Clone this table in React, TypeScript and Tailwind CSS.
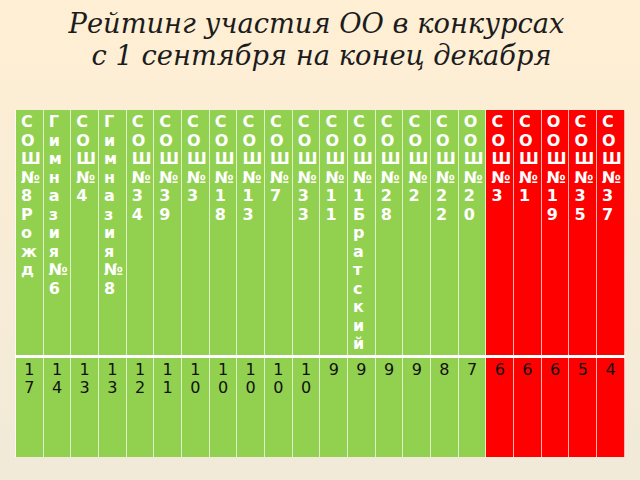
const schools = [
  { name: "СОШ№8Рожд", value: "17", top: true },
  { name: "Гимназия№6", value: "14", top: true },
  { name: "СОШ№4", value: "13", top: true },
  { name: "Гимназия№8", value: "13", top: true },
  { name: "СОШ№34", value: "12", top: true },
  { name: "СОШ№39", value: "11", top: true },
  { name: "СОШ№3", value: "10", top: true },
  { name: "СОШ№18", value: "10", top: true },
  { name: "СОШ№13", value: "10", top: true },
  { name: "СОШ№7", value: "10", top: true },
  { name: "СОШ№33", value: "10", top: true },
  { name: "СОШ№11", value: "9", top: true },
  { name: "СОШ№1Братский", value: "9", top: true },
  { name: "СОШ№28", value: "9", top: true },
  { name: "СОШ№2", value: "9", top: true },
  { name: "СОШ№22", value: "8", top: true },
  { name: "ООШ№20", value: "7", top: true },
  { name: "СОШ№3", value: "6", top: false },
  { name: "СОШ№1", value: "6", top: false },
  { name: "ООШ№19", value: "6", top: false },
  { name: "СОШ№35", value: "5", top: false },
  { name: "СОШ№37", value: "4", top: false },
];

// one character per line, like the narrow cells in the original slide
function Vertical({ text }: { text: string }) {
  return (
    <div className="flex flex-col">
      {text.split("").map((ch, i) => (
        <span key={i} className="block">
          {ch}
        </span>
      ))}
    </div>
  );
}

export default function App() {
  return (
    <div className="flex h-[480px] w-[640px] flex-col overflow-hidden bg-linear-to-b from-[#ffefd4] to-[#f1ead9]">
      <div className="pt-[8px] text-center font-['DejaVu_Serif',serif] text-[27.3px] leading-[32px] italic text-[#1c1c1c]">
        <div className="pr-[7px]">Рейтинг участия ОО в конкурсах</div>
        <div className="pl-[3px]">с 1 сентября на конец декабря</div>
      </div>

      <div className="ml-[15px] mt-[38px]">
        <table className="w-[610px] table-fixed border-collapse font-['DejaVu_Sans',sans-serif] text-[16px] leading-[18.5px]">
          <tbody>
            <tr className="h-[246px] border-b-[3px] border-white">
              {schools.map((s, i) => (
                <td
                  key={i}
                  className={`border-x border-white/70 px-[5px] pt-[3px] align-top font-bold text-white ${
                    s.top ? "bg-[#92d050]" : "bg-[#ff0000]"
                  }`}
                >
                  <Vertical text={s.name} />
                </td>
              ))}
            </tr>
            <tr className="h-[101px]">
              {schools.map((s, i) => (
                <td
                  key={i}
                  className={`border-x border-white/70 pt-[3px] text-center align-top text-[#111] ${
                    s.top ? "bg-[#92d050]" : "bg-[#ff0000]"
                  }`}
                >
                  <Vertical text={s.value} />
                </td>
              ))}
            </tr>
          </tbody>
        </table>
      </div>
    </div>
  );
}
